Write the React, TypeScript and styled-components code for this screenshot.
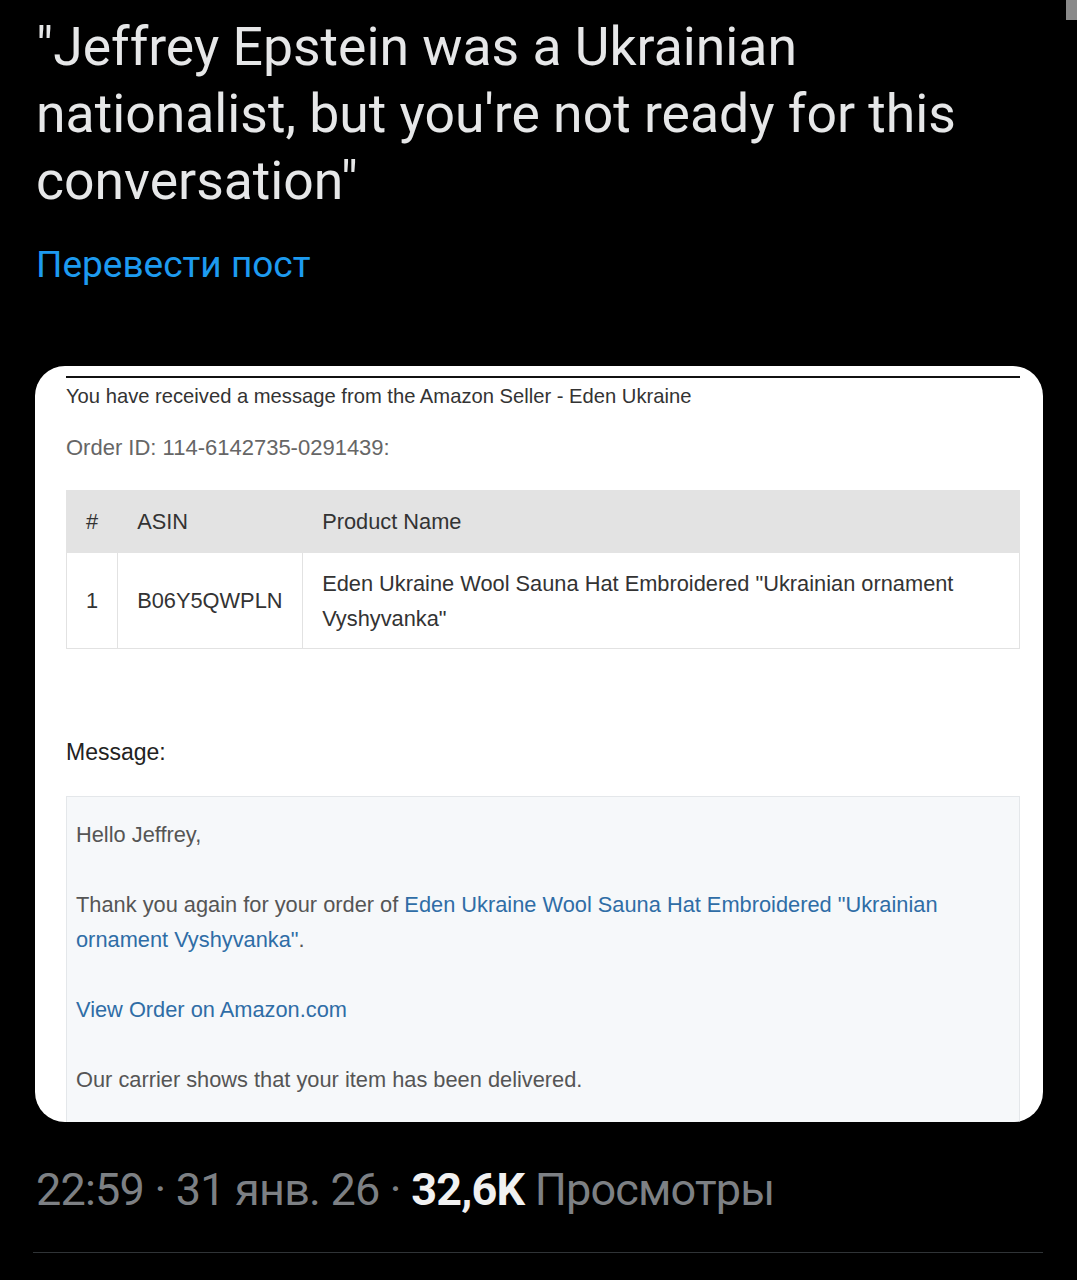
import React from 'react';
import styled, { createGlobalStyle } from 'styled-components';

const GlobalStyle = createGlobalStyle`
  html, body {
    margin: 0;
    padding: 0;
    background: #000;
  }
`;

const rows = [
  {
    id: 1,
    asin: 'B06Y5QWPLN',
    name: 'Eden Ukraine Wool Sauna Hat Embroidered "Ukrainian ornament Vyshyvanka"',
  },
];

function App() {
  return (
    <Page>
      <GlobalStyle />
      <ScrollThumb />
      <TweetText>
        "Jeffrey Epstein was a Ukrainian nationalist, but you're not ready for this
        conversation"
      </TweetText>
      <TranslateLink>Перевести пост</TranslateLink>

      <Card>
        <TopRule />
        <SellerLine>
          You have received a message from the Amazon Seller - Eden Ukraine
        </SellerLine>
        <OrderLine>Order ID: 114-6142735-0291439:</OrderLine>

        <OrderTable>
          <thead>
            <tr>
              <HeadCell $width={51}>#</HeadCell>
              <HeadCell $width={185}>ASIN</HeadCell>
              <HeadCell>Product Name</HeadCell>
            </tr>
          </thead>
          <tbody>
            {rows.map((row) => (
              <tr key={row.id}>
                <BodyCell $center>{row.id}</BodyCell>
                <BodyCell>{row.asin}</BodyCell>
                <BodyCell>{row.name}</BodyCell>
              </tr>
            ))}
          </tbody>
        </OrderTable>

        <MessageLabel>Message:</MessageLabel>

        <MessageBox>
          <Para>Hello Jeffrey,</Para>
          <Para>
            Thank you again for your order of{' '}
            <Link>Eden Ukraine Wool Sauna Hat Embroidered "Ukrainian ornament Vyshyvanka"</Link>.
          </Para>
          <Para>
            <Link>View Order on Amazon.com</Link>
          </Para>
          <Para>Our carrier shows that your item has been delivered.</Para>
        </MessageBox>
      </Card>

      <MetaLine>
        22:59 · 31 янв. 26 · <Views>32,6K</Views> Просмотры
      </MetaLine>
      <Divider />
    </Page>
  );
}
export default App;

const Page = styled.div`
  position: relative;
  width: 1077px;
  min-height: 1280px;
  box-sizing: border-box;
  padding: 13px 34px 0 35px;
  background: #000;
`;

const ScrollThumb = styled.div`
  position: absolute;
  top: 0;
  right: 0;
  width: 11px;
  height: 20px;
  background: #8a8a8a;
`;

const TweetText = styled.div`
  padding-left: 1px;
  font-family: Roboto, 'Noto Sans', sans-serif;
  font-size: 53.5px;
  line-height: 67px;
  color: #e6e7e8;
  max-width: 990px;
`;

const TranslateLink = styled.div`
  margin-top: 29px;
  padding-left: 1px;
  font-family: Roboto, 'Noto Sans', sans-serif;
  font-size: 37px;
  line-height: 44px;
  color: #1d9bf0;
`;

const Card = styled.div`
  margin-top: 79px;
  width: 1008px;
  height: 756px;
  overflow: hidden;
  box-sizing: border-box;
  padding: 10px 23px 0 31px;
  border-radius: 30px;
  background: #fff;
  font-family: 'Liberation Sans', Arial, sans-serif;
`;

const TopRule = styled.div`
  height: 2px;
  background: #111;
`;

const SellerLine = styled.div`
  margin-top: 7px;
  font-size: 20.2px;
  line-height: 22px;
  color: #333;
`;

const OrderLine = styled.div`
  margin-top: 30px;
  font-size: 22px;
  line-height: 22px;
  color: #666;
`;

const OrderTable = styled.table`
  margin-top: 31px;
  width: 100%;
  border-collapse: collapse;
  font-size: 21.8px;
  color: #333;
`;

const HeadCell = styled.th<{ $width?: number }>`
  width: ${(p) => (p.$width ? `${p.$width}px` : 'auto')};
  height: 62px;
  box-sizing: border-box;
  padding: 0 19px;
  text-align: left;
  font-weight: normal;
  background: #e3e3e3;
  border: 1px solid #e3e3e3;
  border-left-color: #f3f3f3;

  &:first-child {
    text-align: center;
    border-left-color: #e3e3e3;
  }
`;

const BodyCell = styled.td<{ $center?: boolean }>`
  height: 96px;
  box-sizing: border-box;
  padding: 0 19px;
  line-height: 35px;
  text-align: ${(p) => (p.$center ? 'center' : 'left')};
  border: 1px solid #e2e2e2;
`;

const MessageLabel = styled.div`
  margin-top: 90px;
  font-size: 23px;
  line-height: 26px;
  color: #222;
`;

const MessageBox = styled.div`
  margin-top: 31px;
  box-sizing: border-box;
  min-height: 400px;
  padding: 20px 9px 0;
  background: #f6f8fa;
  border: 1px solid #e4e7ea;
  font-size: 21.8px;
  line-height: 35px;
  color: #555;
`;

const Para = styled.p`
  margin: 0 0 35px;
`;

const Link = styled.span`
  color: #2f6da6;
`;

const MetaLine = styled.div`
  margin-top: 42px;
  padding-left: 1px;
  font-family: Roboto, 'Noto Sans', sans-serif;
  font-size: 45px;
  line-height: 52px;
  letter-spacing: -0.8px;
  color: #7d8084;
`;

const Views = styled.span`
  font-weight: bold;
  color: #f1f1f1;
`;

const Divider = styled.div`
  margin-top: 36px;
  margin-left: -2px;
  height: 1px;
  background: #2f3336;
`;
